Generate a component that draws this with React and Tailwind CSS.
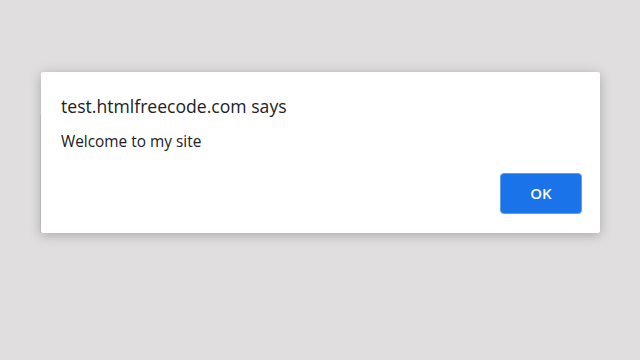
import React from 'react'

function AlertDialog() {
  return (
    <div className="absolute left-[41px] top-[72px] w-[559px] h-[161px] bg-white rounded-[2px] shadow-[0_2px_12px_rgba(0,0,0,0.26)] flex flex-col px-5 pt-[22px] pb-[19px]">
      <h1 className="text-[17.6px] leading-6 text-[#202124]">test.htmlfreecode.com says</h1>
      <p className="mt-[14px] text-[15.4px] leading-5 text-[#202124]">Welcome to my site</p>
      <div className="mt-auto flex justify-end">
        <button className="w-[82px] h-[41px] -mr-[2px] rounded-[4px] bg-[#1a73e8] border border-[#5b9bf0] text-white text-[15px] font-semibold">
          OK
        </button>
      </div>
    </div>
  )
}

export default function App() {
  return (
    <div
      className="relative w-[640px] h-[360px] bg-[#e1dedf] overflow-hidden"
      style={{ fontFamily: '"Open Sans", "Noto Sans", sans-serif' }}
    >
      <div className="pt-[115px] px-[40px]">
        <div className="h-[118px] border-x-[2px] border-[#d3d0d1] bg-[#e3e0e1]" />
      </div>
      <AlertDialog />
    </div>
  )
}
